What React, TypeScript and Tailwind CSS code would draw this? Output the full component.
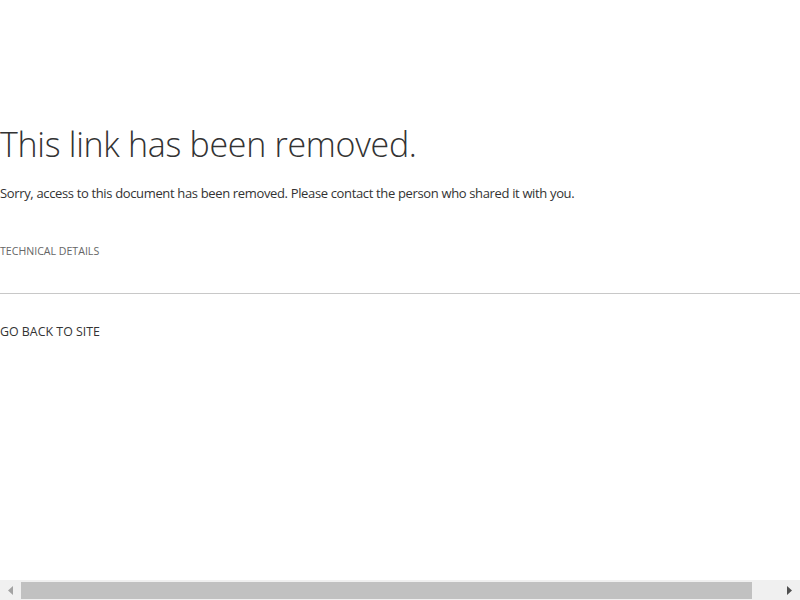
export default function App() {
  return (
    <div className="h-screen w-[800px] flex flex-col bg-white text-[#333] font-['Segoe_UI','Open_Sans',sans-serif] overflow-hidden">
      <div className="flex-1 pt-[118px]">
        <h1 className="text-[34px] tracking-[-0.3px] font-light leading-[52px] text-[#333]">This link has been removed.</h1>
        <p className="mt-[13px] text-[13px] tracking-[-0.35px] leading-[20px] text-[#333]">
          Sorry, access to this document has been removed. Please contact the person who shared it with you.
        </p>
        <div className="mt-[40px] text-[10.6px] leading-[16px] text-[#666] uppercase">Technical Details</div>
        <div className="mt-[34px] border-t border-[#c8c8c8]" />
        <div className="mt-[29px] text-[12.4px] leading-[18px] text-[#333] uppercase">Go back to site</div>
      </div>
      <div className="h-[20px] bg-[#f0f0f0] flex items-center">
        <div className="w-[21px] flex justify-center">
          <svg width="5" height="9" viewBox="0 0 5 9"><path d="M5 0 L0 4.5 L5 9 Z" fill="#a3a3a3" /></svg>
        </div>
        <div className="w-[731px] h-[17px] bg-[#c1c1c1]" />
        <div className="flex-1 flex justify-end pr-[8px]">
          <svg width="5" height="9" viewBox="0 0 5 9"><path d="M0 0 L5 4.5 L0 9 Z" fill="#505050" /></svg>
        </div>
      </div>
    </div>
  );
}
